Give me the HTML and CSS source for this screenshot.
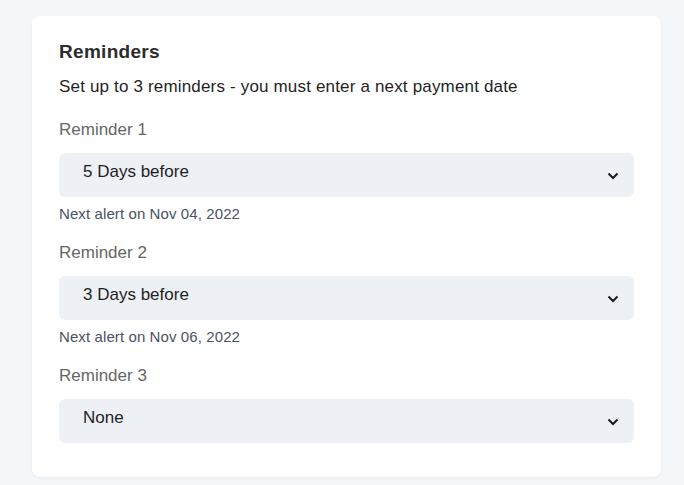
FILE: index.html
```html
<!DOCTYPE html>
<html>
<head>
<meta charset="utf-8">
<link rel="stylesheet" href="styles.css">
</head>
<body>
<div class="page">
  <section class="card">
    <h2 class="title">Reminders</h2>
    <p class="subtitle">Set up to 3 reminders - you must enter a next payment date</p>

    <div class="field">
      <div class="label">Reminder 1</div>
      <div class="select"><span>5 Days before</span>
        <svg class="chev" width="12" height="8" viewBox="0 0 12 8"><path d="M1.5 1.5 L6 6 L10.5 1.5" fill="none" stroke="#1a1a1a" stroke-width="2"/></svg>
      </div>
      <div class="hint">Next alert on Nov 04, 2022</div>
    </div>

    <div class="field">
      <div class="label">Reminder 2</div>
      <div class="select"><span>3 Days before</span>
        <svg class="chev" width="12" height="8" viewBox="0 0 12 8"><path d="M1.5 1.5 L6 6 L10.5 1.5" fill="none" stroke="#1a1a1a" stroke-width="2"/></svg>
      </div>
      <div class="hint">Next alert on Nov 06, 2022</div>
    </div>

    <div class="field">
      <div class="label">Reminder 3</div>
      <div class="select"><span>None</span>
        <svg class="chev" width="12" height="8" viewBox="0 0 12 8"><path d="M1.5 1.5 L6 6 L10.5 1.5" fill="none" stroke="#1a1a1a" stroke-width="2"/></svg>
      </div>
    </div>
  </section>
</div>
</body>
</html>
```
FILE: styles.css
```css
html, body {
  margin: 0;
  padding: 0;
  background: #f4f7fa;
  font-family: "Liberation Sans", Arial, sans-serif;
}
.page {
  padding: 16px 23px 9px 32px;
}
.card {
  background: #ffffff;
  border-radius: 8px;
  box-shadow: 0 1px 3px rgba(0, 0, 0, 0.06);
  padding: 25px 27px 34px 27px;
}
.title {
  margin: 0;
  font-size: 19px;
  letter-spacing: 0.3px;
  font-weight: bold;
  color: #2d2d2d;
  line-height: 22px;
}
.subtitle {
  margin: 14px 0 2px 0;
  font-size: 17px;
  letter-spacing: 0.17px;
  line-height: 20px;
  color: #1f1f1f;
}
.field {
  padding-top: 21px;
}
.label {
  font-size: 17px;
  line-height: 20px;
  color: #666666;
}
.select {
  box-sizing: border-box;
  margin-top: 13px;
  height: 44px;
  background: #edf1f5;
  border-radius: 6px;
  display: flex;
  align-items: center;
  justify-content: space-between;
  padding: 0 15px 0 24px;
  font-size: 17px;
  color: #1f1f1f;
}
.select span {
  margin-top: -6px;
}
.chev {
  display: block;
  margin-top: 1px;
}
.hint {
  margin-top: 8px;
  font-size: 15px;
  letter-spacing: 0.1px;
  line-height: 17px;
  color: #4a5263;
}
```
